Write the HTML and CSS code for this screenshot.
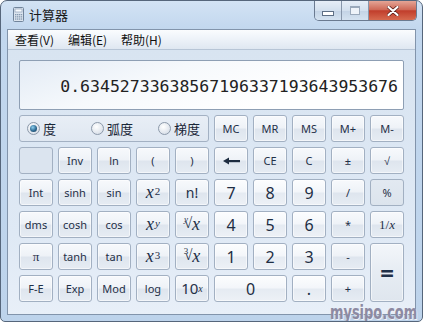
FILE: index.html
```html
<!DOCTYPE html>
<html lang="zh-CN">
<head>
    <meta charset="UTF-8">
    <title>计算器</title>
    <link rel="stylesheet" href="styles.css">
</head>
<body>
    <div class="window">
        <div class="titlebar">
            <svg class="app-icon" width="11" height="15" viewBox="0 0 11 15">
                <rect x="0.5" y="0.5" width="10" height="14" rx="1" fill="#dbe4ee" stroke="#71849b"/>
                <rect x="2" y="2" width="7" height="3" fill="#f8fbfe" stroke="#8fa2b8" stroke-width="0.7"/>
                <g fill="#8599b0">
                    <rect x="2" y="7" width="1.4" height="1.3"/><rect x="4" y="7" width="1.4" height="1.3"/><rect x="6" y="7" width="1.4" height="1.3"/><rect x="8" y="7" width="1.2" height="1.3"/>
                    <rect x="2" y="9.2" width="1.4" height="1.3"/><rect x="4" y="9.2" width="1.4" height="1.3"/><rect x="6" y="9.2" width="1.4" height="1.3"/><rect x="8" y="9.2" width="1.2" height="1.3"/>
                    <rect x="2" y="11.4" width="1.4" height="1.3"/><rect x="4" y="11.4" width="1.4" height="1.3"/><rect x="6" y="11.4" width="1.4" height="1.3"/><rect x="8" y="11.4" width="1.2" height="1.3"/>
                </g>
            </svg>
            <span class="title">计算器</span>
            <div class="caption-buttons">
                <span class="cap cap-min"><span class="min-bar"></span></span>
                <span class="cap cap-max"><span class="max-box"></span></span>
                <span class="cap cap-close">
                    <svg width="12" height="10" viewBox="0 0 12 10">
                        <path d="M1.5 1 L10.5 9 M10.5 1 L1.5 9" stroke="#5b1f1a" stroke-width="3.6" stroke-linecap="round"/>
                        <path d="M1.5 1 L10.5 9 M10.5 1 L1.5 9" stroke="#ffffff" stroke-width="2.2" stroke-linecap="round"/>
                    </svg>
                </span>
            </div>
        </div>
        <div class="client">
            <div class="menubar">
                <span>查看(V)</span>
                <span>编辑(E)</span>
                <span>帮助(H)</span>
            </div>
            <div class="content">
                <div class="display">0.63452733638567196337193643953676</div>
                <div class="keys">
                    <div class="angles">
                        <label class="radio-item"><span class="radio checked"></span>度</label>
                        <label class="radio-item"><span class="radio"></span>弧度</label>
                        <label class="radio-item"><span class="radio"></span>梯度</label>
                    </div>
                    <button class="key">MC</button>
                    <button class="key">MR</button>
                    <button class="key">MS</button>
                    <button class="key">M+</button>
                    <button class="key">M-</button>

                    <button class="key blank"></button>
                    <button class="key">Inv</button>
                    <button class="key">ln</button>
                    <button class="key">(</button>
                    <button class="key">)</button>
                    <button class="key">
                        <svg width="17" height="8" viewBox="0 0 17 8">
                            <path d="M0 4 L6 0.5 L6 7.5 Z" fill="#1d2c40"/>
                            <rect x="5" y="3" width="12" height="2.2" fill="#1d2c40"/>
                        </svg>
                    </button>
                    <button class="key">CE</button>
                    <button class="key">C</button>
                    <button class="key small">±</button>
                    <button class="key small">√</button>

                    <button class="key">Int</button>
                    <button class="key">sinh</button>
                    <button class="key">sin</button>
                    <button class="key math"><i>x</i><sup>2</sup></button>
                    <button class="key big">n!</button>
                    <button class="key num">7</button>
                    <button class="key num">8</button>
                    <button class="key num">9</button>
                    <button class="key small">/</button>
                    <button class="key flat">%</button>

                    <button class="key">dms</button>
                    <button class="key">cosh</button>
                    <button class="key">cos</button>
                    <button class="key math"><i>x</i><sup><i>y</i></sup></button>
                    <button class="key math"><span class="root"><span class="root-index"><i>y</i></span>√</span><i>x</i></button>
                    <button class="key num">4</button>
                    <button class="key num">5</button>
                    <button class="key num">6</button>
                    <button class="key small">*</button>
                    <button class="key recip">1/<i>x</i></button>

                    <button class="key serif">π</button>
                    <button class="key">tanh</button>
                    <button class="key">tan</button>
                    <button class="key math"><i>x</i><sup>3</sup></button>
                    <button class="key math"><span class="root"><span class="root-index">3</span>√</span><i>x</i></button>
                    <button class="key num">1</button>
                    <button class="key num">2</button>
                    <button class="key num">3</button>
                    <button class="key small">-</button>
                    <button class="key equals">=</button>

                    <button class="key">F-E</button>
                    <button class="key">Exp</button>
                    <button class="key">Mod</button>
                    <button class="key">log</button>
                    <button class="key ten">10<sup><i>x</i></sup></button>
                    <button class="key num zero">0</button>
                    <button class="key num">.</button>
                    <button class="key small">+</button>
                </div>
            </div>
        </div>
        <div class="watermark">mysipo.com</div>
    </div>
</body>
</html>
```

FILE: styles.css
```css
body {
    margin: 0;
    background: #ffffff;
    font-family: "Noto Sans", "Noto Sans CJK SC", sans-serif;
}

.window {
    position: relative;
    width: 423px;
    height: 322px;
    box-sizing: border-box;
    border: 1px solid #56667b;
    border-radius: 7px 7px 5px 5px;
    background: linear-gradient(to bottom, #d3e3f4 0px, #c2d7ee 28px, #bdd3eb 100%);
    padding: 0 6px 6px 6px;
    display: flex;
    flex-direction: column;
    overflow: hidden;
}

.titlebar {
    height: 28px;
    display: flex;
    align-items: flex-start;
    margin: 0 -6px;
}

.app-icon {
    margin: 6px 0 0 12px;
}

.title {
    margin: 5px 0 0 5px;
    font-family: "Noto Sans CJK SC", sans-serif;
    font-size: 13px;
    line-height: 17px;
    color: #1a1a1a;
}

.caption-buttons {
    margin-left: auto;
    margin-right: 5px;
    display: flex;
    height: 19px;
    border: 1px solid #6a7a90;
    border-top: none;
    border-radius: 0 0 5px 5px;
    overflow: hidden;
}

.cap {
    display: flex;
    align-items: center;
    justify-content: center;
    height: 19px;
}

.cap-min, .cap-max {
    width: 26px;
    background: linear-gradient(#e6eef7, #d3e0ee 50%, #c3d3e5 51%, #d4e2f0);
    border-right: 1px solid #8796aa;
}

.min-bar {
    width: 10px;
    height: 3px;
    margin-top: 5px;
    background: #ffffff;
    border: 1px solid #5e6f85;
}

.max-box {
    width: 8px;
    height: 6px;
    border: 1px solid #9aa9bb;
    border-top-width: 2px;
    background: #eef3f9;
}

.cap-close {
    width: 47px;
    background: linear-gradient(#e4a596, #cf6a58 45%, #c13e2c 52%, #d66a4f);
}

.client {
    flex: 1;
    display: flex;
    flex-direction: column;
    border: 1px solid #8294ab;
    background: #dbe6f3;
}

.menubar {
    height: 19px;
    display: grid;
    grid-template-columns: repeat(3, 53px);
    align-items: center;
    padding-left: 7px;
    font-family: "Noto Sans CJK SC", sans-serif;
    font-size: 12px;
    color: #111111;
    background: linear-gradient(#fafcfe, #eef3f9 45%, #dfe7f1);
    border-bottom: 1px solid #b7c5d6;
}

.content {
    flex: 1;
    padding: 10px 11px 0 11px;
    background: linear-gradient(#d8e4f1, #dfe9f5 70%, #e8eff8);
}

.display {
    height: 48px;
    box-sizing: content-box;
    border: 1px solid #8e9fb4;
    border-radius: 2px;
    background: linear-gradient(160deg, #e3ebf5 0%, #f6f9fc 35%, #ffffff 70%);
    display: flex;
    justify-content: flex-end;
    align-items: flex-end;
    padding: 0 5px 0 0;
    font-family: "DejaVu Sans Mono", monospace;
    font-size: 16.5px;
    line-height: 20px;
    color: #222222;
    margin-bottom: 5px;
}

.display {
    height: 36px;
    padding-bottom: 12px;
}

.keys {
    display: grid;
    grid-template-columns: repeat(10, 34px);
    grid-template-rows: repeat(6, 27px);
    gap: 5px;
}

.angles {
    grid-column: 1 / span 5;
    border: 1px solid #a3b1c3;
    border-radius: 3px;
    background: linear-gradient(#e8eef6, #dfe7f1);
    display: grid;
    grid-template-columns: 64px 67px auto;
    align-items: center;
    padding-left: 7px;
    font-family: "Noto Sans CJK SC", sans-serif;
    font-size: 13px;
    color: #1a2738;
}

.radio-item {
    display: flex;
    align-items: center;
    gap: 3px;
}

.radio {
    width: 11px;
    height: 11px;
    border-radius: 50%;
    border: 1px solid #8c99aa;
    background: radial-gradient(circle at 40% 35%, #ffffff, #e2e7ee 60%, #cdd5df);
    position: relative;
}

.radio.checked::after {
    content: "";
    position: absolute;
    left: 2px;
    top: 2px;
    width: 7px;
    height: 7px;
    border-radius: 50%;
    background: radial-gradient(circle at 40% 35%, #8fd0ef, #2f6a93 55%, #17364f);
}

.key {
    border: 1px solid #a2b0c2;
    border-radius: 3px;
    padding: 0;
    margin: 0;
    background: linear-gradient(#f7f9fc, #eef2f7 48%, #dee5ee 52%, #e6ecf3);
    box-shadow: inset 0 0 0 1px rgba(255, 255, 255, 0.55);
    font-family: "Noto Sans", sans-serif;
    font-size: 11px;
    color: #1f3048;
    display: flex;
    align-items: center;
    justify-content: center;
    line-height: 1;
}

.key.blank {
    background: #dbe4ef;
    box-shadow: none;
}

.key.flat {
    background: linear-gradient(#e2e9f1, #dce4ed);
    box-shadow: none;
}

.key.num {
    font-size: 16px;
    background: linear-gradient(#fcfdfe, #f3f6fa 48%, #e5ebf2 52%, #edf1f6);
    color: #1e2e44;
}

.key.small {
    font-size: 11px;
}

.key.big {
    font-size: 14px;
}

.key.serif {
    font-family: "Liberation Serif", serif;
    font-size: 13px;
}

.key.math {
    font-family: "Liberation Serif", serif;
    font-size: 18px;
    padding-bottom: 2px;
}

.key.math sup {
    font-size: 11px;
    vertical-align: 8px;
    margin-left: 1px;
}

.root {
    display: inline-flex;
    align-items: flex-start;
    font-size: 15px;
}

.root-index {
    font-size: 9px;
    margin-right: -4px;
    margin-top: -1px;
}

.key.recip {
    font-family: "Liberation Serif", serif;
    font-size: 13px;
}

.key.ten {
    font-size: 15px;
}

.key.ten sup {
    font-family: "Liberation Serif", serif;
    font-size: 10px;
    vertical-align: 7px;
}

.key.equals {
    grid-row: span 2;
    font-size: 24px;
    font-weight: bold;
    background: linear-gradient(#f3f6fa, #e6ecf3 50%, #dfe6ee);
}

.key.zero {
    grid-column: span 2;
}

.watermark {
    position: absolute;
    right: 5px;
    bottom: 0;
    font-family: "DejaVu Sans Condensed", sans-serif;
    font-weight: bold;
    font-size: 20px;
    line-height: 18px;
    color: #8d8aa2;
    text-shadow: 1px 1px 0 #f2f2f6;
    transform: scaleX(0.72);
    transform-origin: right bottom;
}
```
